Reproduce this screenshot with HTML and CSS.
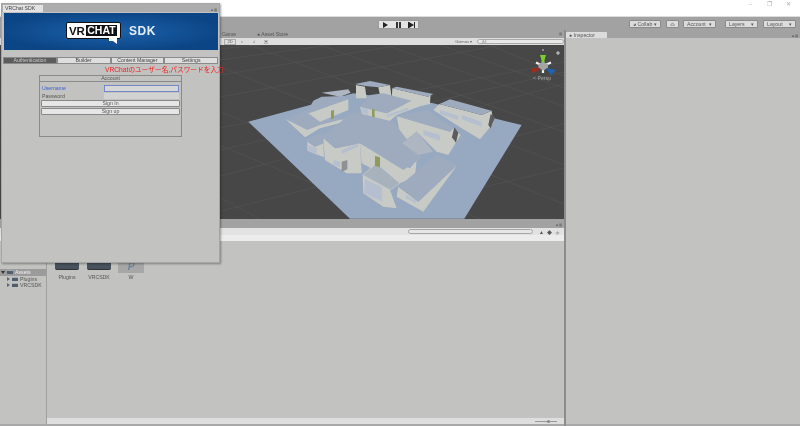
FILE: index.html
```html
<!DOCTYPE html>
<html lang="ja">

<head>
    <meta charset="UTF-8" />
    <meta name="viewport" content="width=device-width, initial-scale=1.0" />
    <title>VRChat SDK</title>
    <link rel="stylesheet" href="styles.css">
</head>

<body>
    <div id="app">
        <div class="titlebar">
            <span class="win-btn">&#8211;</span>
            <span class="win-btn">&#10064;</span>
            <span class="win-btn">&#10005;</span>
        </div>

        <div class="toolbar">
            <div class="play-group">
                <span class="play-btn"><svg width="7" height="6" viewBox="0 0 7 6"><path d="M1 0L6 3L1 6Z" fill="#222" /></svg></span>
                <span class="play-btn"><svg width="7" height="6" viewBox="0 0 7 6"><path d="M1 0H3V6H1ZM4 0H6V6H4Z" fill="#333" /></svg></span>
                <span class="play-btn"><svg width="7" height="6" viewBox="0 0 7 6"><path d="M0 0H1V6H0ZM1 0L6 3L1 6ZM6 0H7V6H6Z" fill="#222" /></svg></span>
            </div>
            <div class="right-group">
                <span class="tool-btn collab">&#9685; Collab &#9662;</span>
                <span class="tool-btn cloud"><svg width="9" height="6" viewBox="0 0 9 6"><path d="M1 5.5H8L7 3H6L4.5 .8L3 3H2Z" fill="none" stroke="#444" stroke-width=".7" /></svg></span>
                <span class="tool-btn account">Account <i>&#9662;</i></span>
                <span class="tool-btn layers">Layers <i>&#9662;</i></span>
                <span class="tool-btn layout">Layout <i>&#9662;</i></span>
            </div>
        </div>

        <div class="main">
            <div class="left-col">
                <div class="tabs-row">
                    <span class="tab-label scene-label">Game</span>
                    <span class="tab-label store-label">&#9679; Asset Store</span>
                    <span class="tab-menu">&#9776;</span>
                </div>
                <div class="scene-toolbar">
                    <span class="st-item st-first">2D</span>
                    <span class="st-item">&#9788;</span>
                    <span class="st-item">&#9835;</span>
                    <span class="st-item">&#9635;</span>
                    <span class="st-spacer"></span>
                    <span class="gizmos">Gizmos &#9662;</span>
                    <span class="scene-search">All</span>
                </div>

                <svg class="scene" viewBox="0 45 564 174" preserveAspectRatio="none">
                    <rect x="0" y="45" width="564" height="174" fill="#474747" />
                    <g class="grid">
                        <path d="M0 112L400 45M0 138L500 45M0 170L564 62M60 219L564 84M190 219L564 124M350 219L564 168M0 70L260 45M0 90L330 45M0 200L564 72" />
                        <path d="M0 80L260 219M0 56L400 219M60 45L480 219M165 45L564 204M250 45L564 165M320 45L564 132M385 45L564 106M440 45L564 88M0 125L150 219M0 180L50 219M490 45L564 76" />
                    </g>
                    <g transform="translate(220 80) scale(.3333)">
                        <polygon class="plane" points="85,125 400,40 640,70 905,135 733,416 390,416" />

                        <!-- left block -->
                        <polygon class="wall" points="197,118 255,172 300,145 375,125 368,118" />
                        <polygon class="roof" points="197,118 255,92 368,118 300,135 262,150" />
                        <polygon class="wall" points="270,98 335,75 385,58 385,90 300,125 265,100" />
                        <polygon class="roof" points="262,95 280,62 305,50 372,48 385,58 335,75 270,98" />
                        <polygon class="roof-l" points="305,38 385,28 392,38 360,50" />
                        <polygon class="wall" points="262,185 285,200 310,190 312,232 262,212" />
                        <polygon class="roof" points="255,180 305,160 310,190 285,200" />

                        <!-- back blocks -->
                        <polygon class="wall" points="408,15 435,20 440,55 408,55" />
                        <polygon class="wall" points="475,22 510,15 515,55 480,45" />
                        <polygon class="roof" points="405,12 450,3 510,15 475,22 435,18" />
                        <polygon class="wall" points="517,25 625,50 632,40 630,72 570,85 515,60" />
                        <polygon class="roof" points="517,25 530,20 640,42 625,50" />
                        <polygon class="wall" points="420,80 500,100 575,62 610,75 530,105 495,135 430,115" />
                        <polygon class="roof" points="420,80 450,45 490,40 575,62 500,100" />

                        <!-- right blocks -->
                        <polygon class="wall" points="640,90 658,72 785,105 815,92 820,130 780,178 725,145" />
                        <polygon class="roof" points="658,72 690,58 815,92 785,105" />
                        <polygon class="wall" points="530,108 690,155 700,145 722,165 685,225 650,215 590,155 545,190" />
                        <polygon class="roof" points="530,108 620,90 700,145 690,155" />

                        <!-- centre block -->
                        <polygon class="wall" points="310,175 345,205 420,190 425,280 380,280 315,240" />
                        <polygon class="wall" points="420,190 570,265 590,240 585,290 540,310 425,250" />
                        <polygon class="roof" points="305,170 400,95 520,125 605,235 550,270 420,190 350,205" />
                        <polygon class="roof-l" points="547,190 590,155 640,215 595,225" />

                        <!-- front blocks -->
                        <polygon class="wall" points="428,285 510,330 530,385 490,380 430,340" />
                        <polygon class="deck" points="428,285 470,250 540,310 510,330" />
                        <polygon class="wall" points="535,320 595,365 712,255 610,395 530,350" />
                        <polygon class="roof" points="535,320 650,225 712,255 595,365" />

                        <!-- windows and doors -->
                        <polygon class="glass" points="435,298 485,320 487,365 433,340" />
                        <polygon class="glass" points="340,240 360,245 360,262 340,255" />
                        <polygon class="glass" points="365,210 415,190 415,200 365,222" />
                        <polygon class="glass" points="660,90 715,107 715,120 660,102" />
                        <polygon class="glass" points="725,105 785,125 785,140 725,118" />
                        <polygon class="glass" points="610,150 660,165 660,182 610,165" />
                        <polygon class="glass" points="500,105 565,82 565,90 500,112" />
                        <polygon class="glass" points="425,82 445,90 445,105 425,98" />
                        <polygon class="glass" points="558,345 590,362 588,370 558,355" />
                        <polygon class="glass" points="265,195 290,205 290,225 265,212" />
                        <polygon class="dark" points="703,142 715,158 708,188 696,172" />
                        <polygon class="dark" points="812,102 825,112 812,145 805,135" />
                        <polygon class="door" points="465,228 480,232 480,262 465,258" />
                        <polygon class="door" points="333,92 342,90 342,115 333,118" />
                        <polygon class="door" points="456,88 464,88 464,112 456,110" />
                        <polygon class="dark-d" points="365,245 382,240 382,268 365,275" />
                    </g>

                    <g class="gizmo">
                        <path class="gz-w" d="M543 66L536 62.5M543 66L551 62.5M543 66V73" />
                        <path d="M540 55H546L544.5 60V64H541.5V60Z" fill="#7bcf2e" />
                        <path d="M538.5 64L543 62L548 64V68L543 70.5L538.5 68Z" fill="#a5a5a5" />
                        <path d="M541 68L531 68.5L533 73.5Z" fill="#a62a1c" />
                        <path d="M546 68L556 70L551 75Z" fill="#1e63b8" />
                        <path class="gz-t" d="M543 49V51M557 52H559V54H557Z" />
                    </g>
                </svg>
                <span class="persp">&lt; Persp</span>

                <div class="strip"><span class="tab-menu">&#9632; &#9776;</span></div>

                <div class="project-toolbar">
                    <span class="project-search"></span>
                    <span class="pt-icon">&#9650;</span>
                    <span class="pt-icon">&#9670;</span>
                    <span class="pt-icon pt-star">&#9733;</span>
                </div>
                <div class="crumb"></div>

                <div class="project">
                    <div class="tree">
                        <div class="tree-row tree-sel">
                            <i class="arrow"></i><i class="folder"></i>Assets
                        </div>
                        <div class="tree-row tree-child">
                            <i class="arrow-r"></i><i class="folder"></i>Plugins
                        </div>
                        <div class="tree-row tree-child">
                            <i class="arrow-r"></i><i class="folder"></i>VRCSDK
                        </div>
                    </div>
                    <div class="files">
                        <div class="file-list">
                            <div class="file">
                                <div class="thumb"></div>
                                <span>Plugins</span>
                            </div>
                            <div class="file">
                                <div class="thumb"></div>
                                <span>VRCSDK</span>
                            </div>
                            <div class="file">
                                <div class="thumb thumb-sel"><b>P</b></div>
                                <span>W</span>
                            </div>
                        </div>
                        <div class="files-foot"><span class="zoom-slider"><i></i></span></div>
                    </div>
                </div>
            </div>

            <div class="inspector">
                <div class="inspector-tabs">
                    <span class="inspector-tab">&#9679; Inspector</span>
                    <span class="tab-menu">&#9632; &#9776;</span>
                </div>
                <div class="inspector-body"></div>
            </div>
        </div>
    </div>

    <div id="sdk-window">
        <div class="sdk-head">
            <span class="sdk-tab">VRChat SDK</span>
            <span class="tab-menu">&#9632; &#9776;</span>
        </div>
        <div class="banner">
            <div class="logo">
                <span class="logo-vr">VR</span><span class="logo-chat">CHAT</span>
                <svg class="logo-tail" width="10" height="7" viewBox="0 0 10 7"><path d="M1 0H9V6L5 3H1Z" fill="#fff" /></svg>
            </div>
            <span class="logo-sdk">SDK</span>
        </div>
        <div class="sdk-tabs">
            <span class="sdk-btn sdk-btn-on">Authentication</span>
            <span class="sdk-btn">Builder</span>
            <span class="sdk-btn">Content Manager</span>
            <span class="sdk-btn">Settings</span>
        </div>
        <div class="note">VRChatのユーザー名,パスワードを入力</div>
        <div class="account-box">
            <div class="account-title">Account</div>
            <div class="field field-first">
                <label class="label-on">Username</label>
                <span class="input input-on"></span>
            </div>
            <div class="field">
                <label>Password</label>
                <span class="input"></span>
            </div>
            <div class="wide-btn">Sign In</div>
            <div class="wide-btn wide-btn-next">Sign up</div>
        </div>
    </div>
</body>

</html>
```

FILE: styles.css
```css
* {
    box-sizing: border-box;
}

html,
body {
    margin: 0;
    width: 800px;
    height: 426px;
    overflow: hidden;
    background-color: #c2c2c0;
    font-family: "Liberation Sans", "Noto Sans CJK JP", sans-serif;
    font-size: 5.2px;
    color: #555;
}

body {
    filter: blur(0.35px);
}

i {
    font-style: normal;
}

#app {
    display: flex;
    flex-direction: column;
    height: 426px;
}

/* top of the editor */
.titlebar {
    height: 17px;
    background-color: #fff;
    display: flex;
    justify-content: flex-end;
    padding: 1px 2px 0 0;
    border-bottom: 1px solid #ddd;
}

.win-btn {
    width: 19px;
    font-size: 6px;
    line-height: 7px;
    text-align: center;
    color: #aaa;
}

.toolbar {
    height: 13px;
    background-color: #a2a2a2;
    display: flex;
    align-items: flex-start;
    padding: 3px 4px 0 378px;
}

.play-group {
    display: flex;
    height: 9px;
    border-radius: 1px;
    background-color: #e4e4e4;
    border: 1px solid #999;
}

.play-btn {
    width: 13px;
    display: flex;
    align-items: center;
    justify-content: center;
}

.right-group {
    margin-left: auto;
    display: flex;
    gap: 4px;
}

.tool-btn {
    height: 8px;
    line-height: 6px;
    background-color: #dcdcdc;
    border: 1px solid #8a8a8a;
    border-radius: 1px;
    padding: 0 3px;
    display: flex;
    justify-content: space-between;
}

.collab {
    width: 32px;
    margin-right: 1px;
}

.cloud {
    width: 13px;
    align-items: center;
    justify-content: center;
}

.account {
    width: 33px;
    margin-right: 5px;
}

.layers {
    width: 33px;
    margin-right: 1px;
}

.layout {
    width: 33px;
}

.main {
    flex: 1;
    display: flex;
    min-height: 0;
}

.left-col {
    width: 566px;
    flex-shrink: 0;
    display: flex;
    flex-direction: column;
    position: relative;
    border-right: 2px solid #8c8c8c;
    background-color: #a8a8a8;
}

/* scene view */
.tabs-row {
    height: 8px;
    background-color: #a2a2a2;
    display: flex;
    align-items: center;
    padding: 0 2px 0 222px;
}

.tab-label {
    color: #555;
}

.scene-label {
    width: 35px;
}

.tabs-row .tab-menu {
    margin-left: auto;
}

.tab-menu {
    font-size: 3px;
    color: #555;
}

.scene-toolbar {
    height: 7px;
    background-color: #dedede;
    display: flex;
    align-items: center;
    padding-left: 224px;
    font-size: 4px;
}

.st-item {
    width: 12px;
    text-align: center;
}

.st-first {
    border: 1px solid #aaa;
    line-height: 4px;
}

.st-spacer {
    flex: 1;
}

.gizmos {
    margin-right: 5px;
    color: #666;
}

.scene-search {
    width: 87px;
    height: 5px;
    line-height: 3px;
    padding-left: 4px;
    border: 1px solid #aaa;
    border-radius: 3px;
    background-color: #e8e8e8;
    color: #999;
}

.scene {
    display: block;
    width: 564px;
    height: 174px;
    flex-shrink: 0;
}

.grid path {
    stroke: #565656;
    stroke-width: 0.6;
    fill: none;
}

.plane {
    fill: #97a8c1;
}

.wall {
    fill: #c8cbc5;
}

.roof {
    fill: #9eabbf;
}

.roof-l {
    fill: #aeb6c2;
}

.deck {
    fill: #a8b2bc;
    stroke: #d6d8d6;
    stroke-width: 1.5;
}

.glass {
    fill: #b5bfd0;
}

.dark {
    fill: #5c5c5c;
}

.dark-d {
    fill: #8d9193;
}

.door {
    fill: #8f9a5c;
}

.gz-w {
    stroke: #f2f2f2;
    stroke-width: 2.2;
    fill: none;
}

.gz-t {
    stroke: #d0d0d0;
    stroke-width: 1;
    fill: none;
}

.persp {
    position: absolute;
    left: 533px;
    top: 45px;
    color: #aaa;
}

/* project panel */
.strip {
    height: 9px;
    background-color: #a2a2a2;
    text-align: right;
    padding-right: 2px;
    line-height: 11px;
}

.project-toolbar {
    height: 7px;
    background-color: #e2e2e2;
    display: flex;
    align-items: center;
    justify-content: flex-end;
    padding-right: 3px;
    gap: 1px;
}

.project-search {
    width: 125px;
    height: 5px;
    margin-right: 4px;
    border: 1px solid #a5a5a5;
    border-radius: 3px;
    background-color: #e6e6e6;
}

.pt-icon {
    width: 7px;
    font-size: 5px;
    text-align: center;
}

.pt-star {
    color: #aaa;
}

.crumb {
    height: 6px;
    background-color: #ececec;
}

.project {
    flex: 1;
    display: flex;
    min-height: 0;
    margin-bottom: 2px;
    background-color: #c2c2c0;
}

.tree {
    width: 47px;
    flex-shrink: 0;
    border-right: 1px solid #a0a0a0;
    padding-top: 28px;
}

.tree-row {
    height: 6.5px;
    display: flex;
    align-items: center;
    gap: 1px;
    padding-left: 1px;
}

.tree-sel {
    background-color: #9b9b9b;
    color: #eee;
}

.tree-child {
    padding-left: 7px;
}

.arrow {
    width: 0;
    height: 0;
    border-left: 2px solid transparent;
    border-right: 2px solid transparent;
    border-top: 3px solid #333;
}

.arrow-r {
    width: 0;
    height: 0;
    border-top: 2px solid transparent;
    border-bottom: 2px solid transparent;
    border-left: 3px solid #666;
}

.folder {
    width: 6px;
    height: 4px;
    margin: 0 1px;
    background-color: #4f5e6c;
    border-top: 1px solid #a4adb5;
}

.files {
    flex: 1;
    display: flex;
    flex-direction: column;
}

.file-list {
    flex: 1;
    display: flex;
    gap: 6px;
    padding-left: 7px;
}

.file {
    width: 26px;
    display: flex;
    flex-direction: column;
    align-items: center;
    gap: 4px;
    padding-top: 20px;
    line-height: 6px;
}

.thumb {
    width: 24px;
    height: 9px;
    background-color: #47525e;
    border-bottom: 1px solid #333;
    border-radius: 0 0 2px 2px;
}

.thumb-sel {
    width: 26px;
    height: 12px;
    margin-bottom: -3px;
    background-color: #a7a7a7;
    border: 0;
    border-radius: 0;
    font-size: 10px;
    font-style: italic;
    text-align: center;
    color: #718398;
    line-height: 11px;
}

.files-foot {
    height: 6px;
    background-color: #dedede;
    display: flex;
    align-items: center;
    justify-content: flex-end;
    padding-right: 7px;
}

.zoom-slider {
    width: 22px;
    height: 1px;
    background-color: #999;
    position: relative;
}

.zoom-slider i {
    position: absolute;
    left: 12px;
    top: -1px;
    width: 3px;
    height: 3px;
    border-radius: 50%;
    background-color: #888;
}

/* inspector */
.inspector {
    flex: 1;
    display: flex;
    flex-direction: column;
}

.inspector-tabs {
    height: 8px;
    background-color: #a2a2a2;
    display: flex;
    justify-content: space-between;
    align-items: flex-end;
    padding-right: 2px;
}

.inspector-tab {
    width: 41px;
    height: 6px;
    line-height: 6px;
    padding-left: 3px;
    background-color: #dcdcdc;
    border-radius: 1px 1px 0 0;
}

.inspector-body {
    flex: 1;
    background-color: #c2c2c0;
    border-bottom: 2px solid #a8a8a8;
}

/* floating VRChat SDK window */
#sdk-window {
    position: absolute;
    left: 1px;
    top: 3px;
    width: 219px;
    height: 260px;
    background-color: #c2c2c0;
    border: 1px solid #a5a5a5;
    box-shadow: 1px 1px 2px rgba(0, 0, 0, 0.35);
    display: flex;
    flex-direction: column;
}

.sdk-head {
    height: 8px;
    background-color: #adadad;
    display: flex;
    justify-content: space-between;
    align-items: flex-end;
    padding-right: 2px;
}

.sdk-tab {
    width: 40px;
    height: 7px;
    line-height: 7px;
    margin-left: 1px;
    padding-left: 2px;
    background-color: #e2e2e2;
    color: #444;
}

.banner {
    height: 37px;
    margin: 1px 1px 0 2px;
    background-color: #0f4f94;
    background-image: radial-gradient(ellipse at center, #1b62ac, #0c4585 75%);
    display: flex;
    align-items: center;
    justify-content: center;
    gap: 8px;
    padding-bottom: 2px;
}

.logo {
    display: flex;
    align-items: center;
    height: 17px;
    width: 55px;
    padding: 0 3px 0 2px;
    background-color: #fff;
    border: 1px solid #111;
    border-radius: 2px;
    position: relative;
    font-weight: bold;
    font-size: 11.5px;
    gap: 1px;
}

.logo-vr {
    color: #111;
}

.logo-chat {
    flex: 1;
    background-color: #111;
    color: #fff;
    text-align: center;
    font-size: 10.5px;
    line-height: 11px;
}

.logo-tail {
    position: absolute;
    right: 2px;
    bottom: -7px;
}

.logo-sdk {
    color: #e4edf5;
    font-size: 12px;
    font-weight: bold;
    letter-spacing: 0.6px;
}

.sdk-tabs {
    display: flex;
    margin: 7px 1px 0 1px;
}

.sdk-btn {
    flex: 1;
    height: 7px;
    line-height: 5px;
    text-align: center;
    background-color: #dedede;
    border: 1px solid #8a8a8a;
    color: #444;
}

.sdk-btn-on {
    background-color: #5c5c5c;
    color: #c8c8c8;
}

.note {
    height: 11px;
    line-height: 11px;
    margin-left: 103px;
    margin-right: -4px;
    font-size: 6.7px;
    color: #f02020;
    white-space: nowrap;
}

.account-box {
    display: flex;
    flex-direction: column;
    width: 143px;
    height: 62px;
    margin-left: 37px;
    border: 1px solid #8a8a8a;
    padding: 0 1px;
}

.account-title {
    height: 6px;
    line-height: 5px;
    text-align: center;
    margin: 0 -1px;
    border-bottom: 1px solid #8a8a8a;
}

.field {
    display: flex;
    align-items: center;
    justify-content: space-between;
    height: 8px;
    padding: 0 1px;
}

.field-first {
    margin-top: 2px;
}

.label-on {
    color: #3a5fd8;
}

.input {
    width: 75px;
    height: 6px;
    background-color: #d2d2d2;
}

.input-on {
    height: 7px;
    background-color: #d6d6d6;
    border: 1px solid #7288c8;
}

.wide-btn {
    height: 7px;
    line-height: 5px;
    text-align: center;
    background-color: #e6e6e6;
    border: 1px solid #888;
    border-radius: 1px;
}

.wide-btn-next {
    margin-top: 1px;
}
```
